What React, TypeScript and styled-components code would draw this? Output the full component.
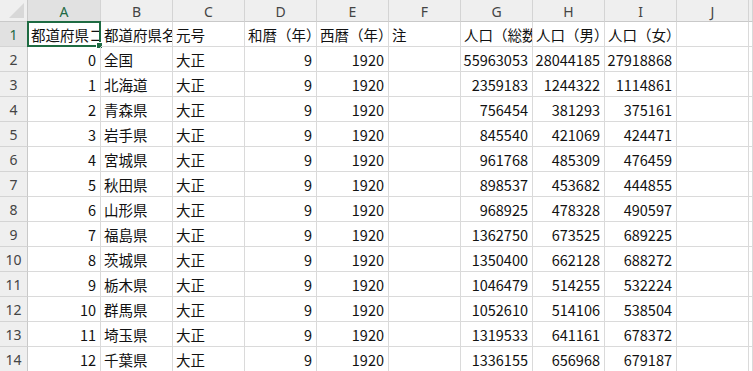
import React from "react";
import styled, { createGlobalStyle } from "styled-components";

const GlobalStyle = createGlobalStyle`
  html, body {
    margin: 0;
    padding: 0;
    background: #ffffff;
    overflow: hidden;
  }
`;

const cols = ["A", "B", "C", "D", "E", "F", "G", "H", "I", "J", ""];

type Row = [string, string, string, string, string, string, string, string, string];

const header: string[] = [
  "都道府県コード",
  "都道府県名",
  "元号",
  "和暦（年）",
  "西暦（年）",
  "注",
  "人口（総数）",
  "人口（男）",
  "人口（女）",
];

const rows: Row[] = [
  ["0", "全国", "大正", "9", "1920", "", "55963053", "28044185", "27918868"],
  ["1", "北海道", "大正", "9", "1920", "", "2359183", "1244322", "1114861"],
  ["2", "青森県", "大正", "9", "1920", "", "756454", "381293", "375161"],
  ["3", "岩手県", "大正", "9", "1920", "", "845540", "421069", "424471"],
  ["4", "宮城県", "大正", "9", "1920", "", "961768", "485309", "476459"],
  ["5", "秋田県", "大正", "9", "1920", "", "898537", "453682", "444855"],
  ["6", "山形県", "大正", "9", "1920", "", "968925", "478328", "490597"],
  ["7", "福島県", "大正", "9", "1920", "", "1362750", "673525", "689225"],
  ["8", "茨城県", "大正", "9", "1920", "", "1350400", "662128", "688272"],
  ["9", "栃木県", "大正", "9", "1920", "", "1046479", "514255", "532224"],
  ["10", "群馬県", "大正", "9", "1920", "", "1052610", "514106", "538504"],
  ["11", "埼玉県", "大正", "9", "1920", "", "1319533", "641161", "678372"],
  ["12", "千葉県", "大正", "9", "1920", "", "1336155", "656968", "679187"],
];

// columns that hold numbers are right aligned
const numeric = [true, false, false, true, true, false, true, true, true];

const Sheet = styled.div`
  display: grid;
  grid-template-columns: 28px 73px repeat(9, 72px) 1fr;
  grid-template-rows: 22px repeat(14, 25px);
  width: 753px;
  height: 371px;
  overflow: hidden;
  background: #ffffff;
  font-family: "Noto Sans CJK JP", "Noto Sans", sans-serif;
`;

const Corner = styled.div`
  position: relative;
  background: #efefef;
  border-right: 1px solid #c9c9c9;
  border-bottom: 1px solid #c9c9c9;

  &::after {
    content: "";
    position: absolute;
    right: 3px;
    bottom: 3px;
    width: 0;
    height: 0;
    border-left: 15px solid transparent;
    border-bottom: 15px solid #d8d8d8;
  }
`;

const ColHead = styled.div<{ $active?: boolean }>`
  display: flex;
  align-items: center;
  justify-content: center;
  background: ${(p) => (p.$active ? "#e1e1e1" : "#efefef")};
  color: ${(p) => (p.$active ? "#1d6a44" : "#444444")};
  border-right: 1px solid #d4d4d4;
  border-bottom: 1px solid #c9c9c9;
  font-family: "Noto Sans", "Liberation Sans", sans-serif;
  font-size: 14px;
  padding-top: 1px;
`;

const RowHead = styled.div<{ $active?: boolean }>`
  display: flex;
  align-items: center;
  justify-content: center;
  background: ${(p) => (p.$active ? "#e1e1e1" : "#efefef")};
  color: ${(p) => (p.$active ? "#1d6a44" : "#444444")};
  border-right: 1px solid #c9c9c9;
  border-bottom: 1px solid #d4d4d4;
  font-family: "Noto Sans", "Liberation Sans", sans-serif;
  font-size: 14px;
`;

const Cell = styled.div<{ $right?: boolean; $selected?: boolean }>`
  position: relative;
  display: flex;
  align-items: center;
  justify-content: ${(p) => (p.$right ? "flex-end" : "flex-start")};
  padding: 1px ${(p) => (p.$right ? "4px" : "0")} 0 ${(p) => (p.$right ? "0" : "3px")};
  border-right: 1px solid #dadada;
  border-bottom: 1px solid #dadada;
  color: #111111;
  font-size: 14.5px;
  white-space: nowrap;
  overflow: ${(p) => (p.$selected ? "visible" : "hidden")};
  min-width: 0;
`;

const Clip = styled.span`
  display: block;
  overflow: hidden;
  max-width: 100%;
`;

const Selection = styled.div`
  position: absolute;
  left: -1px;
  top: -1px;
  right: -1px;
  bottom: -1px;
  border: 2px solid #1e6b42;
  pointer-events: none;

  &::after {
    content: "";
    position: absolute;
    right: -4px;
    bottom: -4px;
    width: 5px;
    height: 5px;
    background: #1e6b42;
    border: 1px solid #ffffff;
  }
`;

export default function App() {
  return (
    <>
      <GlobalStyle />
      <Sheet>
        <Corner />
        {cols.map((c, i) => (
          <ColHead key={"h" + i} $active={c === "A"}>
            {c}
          </ColHead>
        ))}

        <RowHead $active>1</RowHead>
        {header.map((h, i) => (
          <Cell key={"r1" + i} $selected={i === 0}>
            <Clip>{h}</Clip>
            {i === 0 && <Selection />}
          </Cell>
        ))}
        <Cell />
        <Cell />

        {rows.map((r, ri) => (
          <React.Fragment key={ri}>
            <RowHead>{ri + 2}</RowHead>
            {r.map((v, ci) => (
              <Cell key={ci} $right={numeric[ci]}>
                {v}
              </Cell>
            ))}
            <Cell />
            <Cell />
          </React.Fragment>
        ))}
      </Sheet>
    </>
  );
}
